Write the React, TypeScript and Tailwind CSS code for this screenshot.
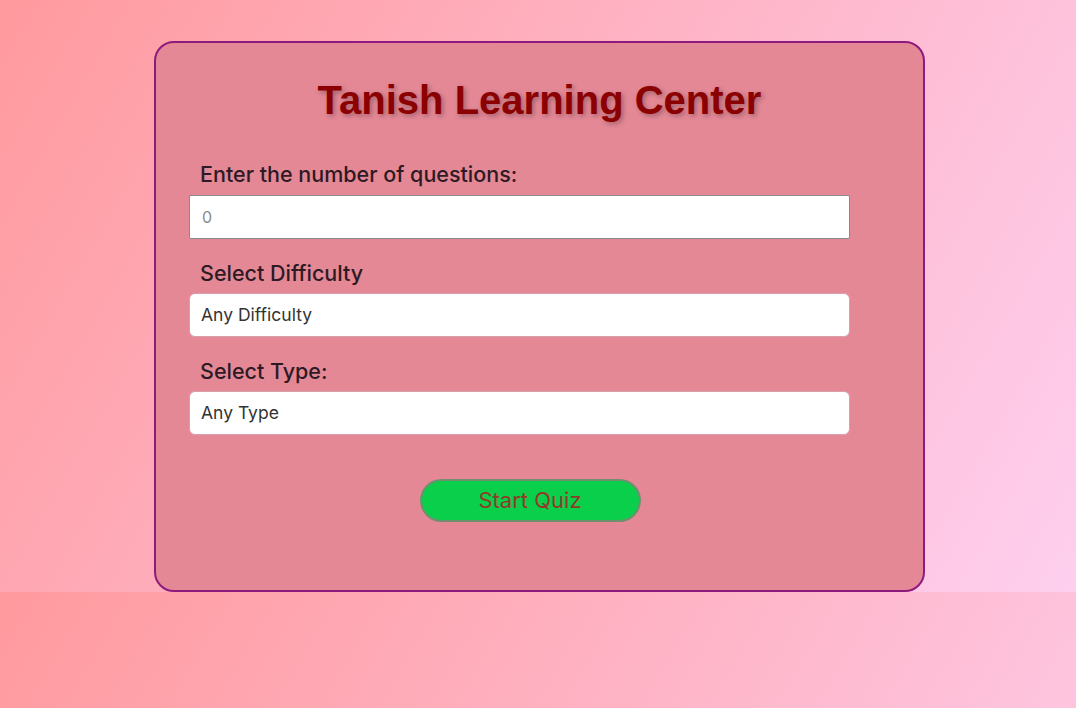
export default function App() {
  return (
    <div className="min-h-[708px] bg-[linear-gradient(120deg,#ff9a9e_0%,#fecfef_100%)] bg-[length:100%_592px] bg-repeat-y font-['Inter','Liberation_Sans',sans-serif]">
      <div className="h-[592px] pt-[41px]">
        <div className="ml-[154px] w-[771px] h-[551px] rounded-[20px] border-2 border-[#8e1a7e] bg-[#e48896] px-[33px] pt-[32px]">
          <h1 className="text-center font-['Liberation_Sans',Arial,sans-serif] text-[40px] font-bold leading-[50px] text-[#8b0000] [text-shadow:2px_2px_5px_rgba(0,0,0,0.3)]">
            Tanish Learning Center
          </h1>

          <div className="w-[682px]">
            <div className="mt-[35px]">
              <label className="block pl-[11px] text-[21.5px] font-medium leading-[28px] text-[#2e1a24]">
                Enter the number of questions:
              </label>
              <input
                type="number"
                placeholder="0"
                className="mt-[7px] block h-[44px] w-[661px] rounded-[2px] border border-[#8a8a8a] bg-white px-[12px] text-[16px] text-[#333] placeholder:text-[#8a8a8a] outline-none"
              />
            </div>

            <div className="mt-[20px]">
              <label className="block pl-[11px] text-[21.5px] font-medium leading-[28px] text-[#2e1a24]">
                Select Difficulty
              </label>
              <select className="mt-[6px] block h-[44px] w-[661px] appearance-none rounded-[6px] border border-[#d9a0aa] bg-white px-[11px] text-[17.5px] text-[#333] outline-none">
                <option>Any Difficulty</option>
                <option>Easy</option>
                <option>Medium</option>
                <option>Hard</option>
              </select>
            </div>

            <div className="mt-[20px]">
              <label className="block pl-[11px] text-[21.5px] font-medium leading-[28px] text-[#2e1a24]">
                Select Type:
              </label>
              <select className="mt-[6px] block h-[44px] w-[661px] appearance-none rounded-[6px] border border-[#d9a0aa] bg-white px-[11px] text-[17.5px] text-[#333] outline-none">
                <option>Any Type</option>
                <option>Multiple Choice</option>
                <option>True / False</option>
              </select>
            </div>

            <div className="mt-[44px] flex justify-center">
              <button className="h-[43px] w-[221px] rounded-full border-2 border-[#6f8f6f] bg-[#0acf4a] text-[22px] text-[#923a2a]">
                Start Quiz
              </button>
            </div>
          </div>
        </div>
      </div>
    </div>
  )
}
